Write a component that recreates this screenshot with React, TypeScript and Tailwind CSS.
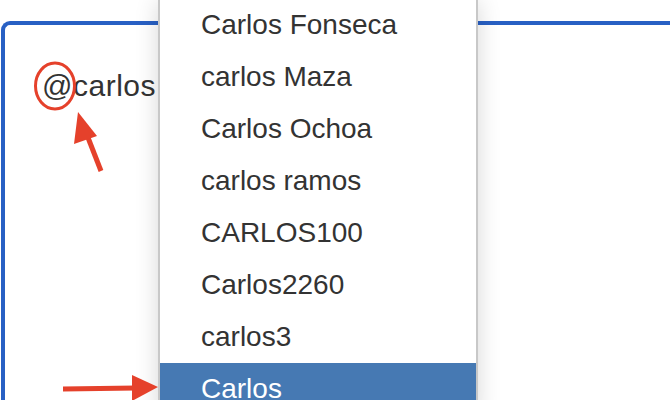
const NAMES = [
  "Carlos Fonseca",
  "carlos Maza",
  "Carlos Ochoa",
  "carlos ramos",
  "CARLOS100",
  "Carlos2260",
  "carlos3",
  "Carlos",
];

function Annotations() {
  // red marks drawn over the screenshot
  return (
    <svg className="absolute inset-0 pointer-events-none" width="670" height="400" viewBox="0 0 670 400">
      <ellipse cx="55" cy="86" rx="19.5" ry="23" fill="none" stroke="#e5412b" strokeWidth="3" />
      <line x1="101" y1="171" x2="87" y2="135" stroke="#e5412b" strokeWidth="5" />
      <polygon points="78,112 97,136 74,144" fill="#e5412b" />
      <line x1="63" y1="389" x2="136" y2="388" stroke="#e5412b" strokeWidth="5" />
      <polygon points="158,387 132,375 132,401" fill="#e5412b" />
    </svg>
  );
}

export default function App() {
  const selected = NAMES.length - 1;
  return (
    <div className="relative w-[670px] h-[400px] overflow-hidden bg-white" style={{ fontFamily: '"Liberation Sans", Arial, sans-serif' }}>
      <div className="mt-[21px] ml-[1px] h-[420px] border-l-4 border-t-4 border-[#2860c4] rounded-tl-[9px]">
        <div className="pl-[37px] pt-[43px] text-[30px] leading-[1.2] text-[#333333] tracking-[0.5px]">@carlos</div>
      </div>

      <ul className="absolute top-[-1px] left-[158px] w-[320px] bg-white border-x-2 border-[#c8c8c8] shadow-[0_2px_22px_rgba(0,0,0,0.16)]">
        {NAMES.map((name, i) => (
          <li
            key={name}
            className={
              "h-[52px] pl-[41px] flex items-center text-[28px] " +
              (i === selected ? "bg-[#4679b3] text-white" : "text-[#333333]")
            }
          >
            {name}
          </li>
        ))}
      </ul>

      <Annotations />
    </div>
  );
}
